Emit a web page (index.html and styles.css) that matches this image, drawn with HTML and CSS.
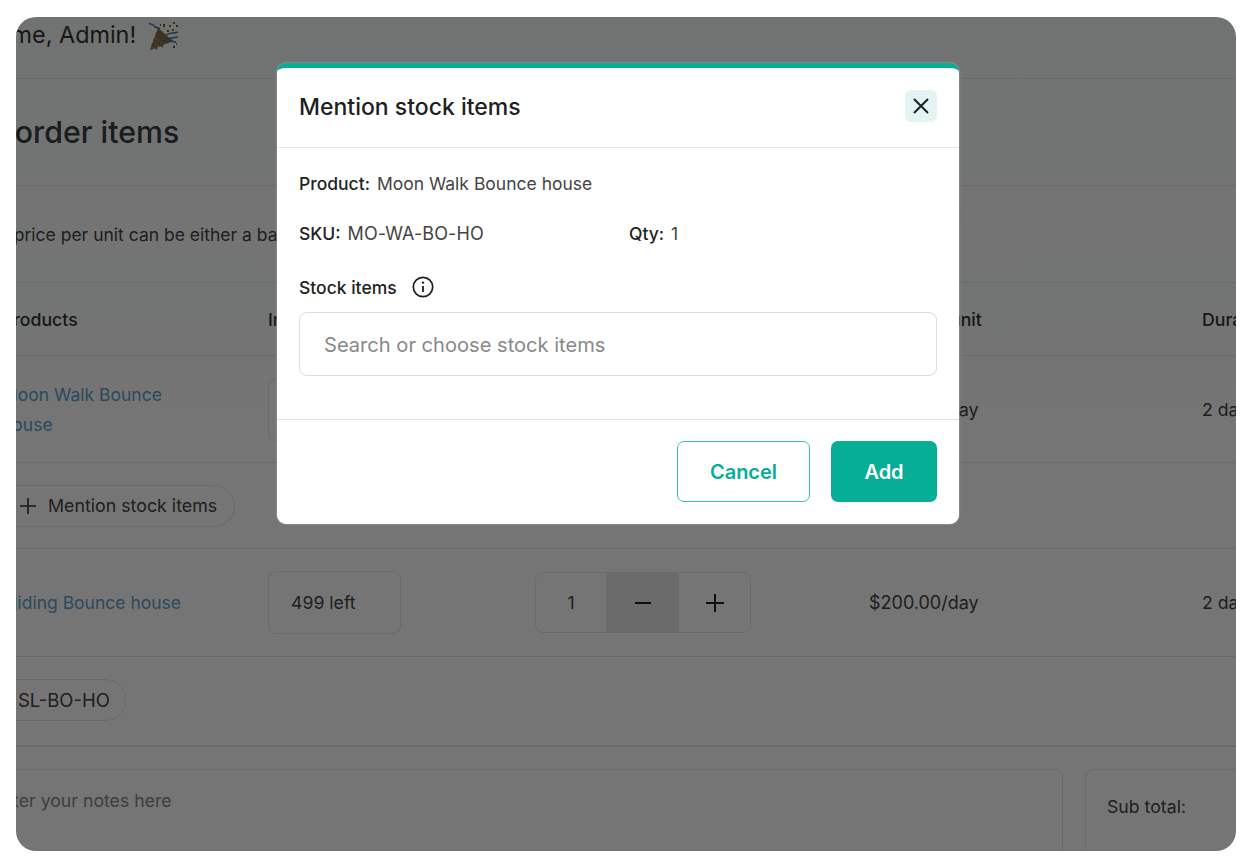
FILE: index.html
```html
<!DOCTYPE html>
<html lang="en">
<head>
<meta charset="utf-8">
<title>Mention stock items</title>
<link rel="stylesheet" href="styles.css">
</head>
<body>
<div class="frame">
  <main class="sheet">
    <header class="topbar">
      <span class="welcome">Welcome, Admin!</span>
      <svg class="popper" viewBox="0 0 30 30" width="30" height="30" aria-hidden="true">
        <path d="M1 28 L9 6 L24 19 Z" fill="#8c6b3c"/>
        <path d="M1 28 L6 14 L15 23 Z" fill="#a27c45"/>
        <path d="M5 17 L14 25 M3 22 L8 27 M7 11 L19 21" stroke="#6f7375" stroke-width="2"/>
        <path d="M0 1 C3 3 5 2 6 5 C8 6 9 5 11 7 M17 13 C21 10 24 12 29 10 M17 17 L29 15 M20 19 L27 20" stroke="#44739a" stroke-width="1.5" fill="none"/>
        <path d="M14 2h2v3h-2z M20 3h2v2h-2z M24 0h2v2h-2z M27 3h2v2h-2z M23 7h2v2h-2z M18 8h2v2h-2z M24 24h2v2h-2z M27 21h1v2h-1z M11 2h1v2h-1z" fill="#7d5f32"/>
      </svg>
    </header>
    <section class="titlebar"><h1 class="title">Add order items</h1></section>
    <p class="note">The price per unit can be either a base price or a custom price</p>
    <div class="row row-head">
      <span class="cell-product">Products</span><span>Inventory</span><span>Quantity</span><span>Price per unit</span><span>Duration</span>
    </div>
    <div class="row row-item row-tall">
      <a class="link cell-product">Moon Walk Bounce<br>house</a>
      <span class="stock">499 left</span>
      <span></span>
      <span class="price">$200.00/day</span>
      <span>2 days</span>
    </div>
    <div class="chip-row chip-row-first">
      <span class="chip chip-add">
        <svg viewBox="0 0 18 18" width="18" height="18" aria-hidden="true"><path d="M9 1v16M1 9h16" stroke="#333" stroke-width="1.6"/></svg>
        Mention stock items
      </span>
    </div>
    <div class="row row-item">
      <a class="link cell-product">Sliding Bounce house</a>
      <span class="stock">499 left</span>
      <span class="stepper">
        <span class="step-value">1</span>
        <span class="step-btn step-active"><svg viewBox="0 0 20 20" width="20" height="20" aria-hidden="true"><path d="M2 10h16" stroke="#222" stroke-width="2"/></svg></span>
        <span class="step-btn"><svg viewBox="0 0 20 20" width="20" height="20" aria-hidden="true"><path d="M10 1v18M1 10h18" stroke="#222" stroke-width="2"/></svg></span>
      </span>
      <span class="price">$200.00/day</span>
      <span>2 days</span>
    </div>
    <div class="chip-row chip-row-last">
      <span class="chip chip-sku">SL-BO-HO</span>
    </div>
    <div class="bottom">
      <div class="notes">Enter your notes here</div>
      <div class="summary">Sub total:</div>
    </div>
  </main>
  <div class="overlay">
    <div class="modal">
      <div class="modal-head">
        <h2 class="modal-title">Mention stock items</h2>
        <button class="close" type="button" aria-label="Close">
          <svg viewBox="0 0 18 18" width="18" height="18" aria-hidden="true"><path d="M2 2l14 14M16 2L2 16" stroke="#1d1f24" stroke-width="2"/></svg>
        </button>
      </div>
      <div class="modal-body">
        <p class="info"><b>Product:</b> Moon Walk Bounce house</p>
        <div class="info-pair">
          <p class="info"><b>SKU:</b> <span class="sku">MO-WA-BO-HO</span></p>
          <p class="info"><b>Qty:</b> 1</p>
        </div>
        <div class="label">
          Stock items
          <svg viewBox="0 0 22 22" width="22" height="22" aria-hidden="true"><circle cx="11" cy="11" r="9.7" fill="none" stroke="#1d1f24" stroke-width="1.7"/><path d="M11 10v6" stroke="#1d1f24" stroke-width="1.8"/><circle cx="11" cy="6.6" r="1.2" fill="#1d1f24"/></svg>
        </div>
        <div class="search">Search or choose stock items</div>
      </div>
      <div class="modal-foot">
        <button class="btn btn-cancel" type="button">Cancel</button>
        <button class="btn btn-add" type="button">Add</button>
      </div>
    </div>
  </div>
</div>
</body>
</html>
```

FILE: styles.css
```css
* { box-sizing: border-box; }
html, body { margin: 0; height: 100%; background: #fff; }
body {
  padding: 17px 16px 16px;
  font-family: Inter, "Noto Sans", sans-serif;
  overflow: hidden;
}
.frame {
  position: relative;
  width: 1220px;
  height: 834px;
  border-radius: 20px;
  overflow: hidden;
  background: #fff;
}
.sheet {
  width: 1400px;
  margin-left: -80px;
  color: #444;
  font-size: 17.7px;
  background: linear-gradient(#f7fbf9, #ffffff 65%);
  min-height: 100%;
}
.topbar {
  height: 62px;
  border-bottom: 1px solid #e8e8e8;
  padding: 0 0 26px 7px;
  display: flex;
  align-items: center;
  gap: 13px;
}
.welcome { font-size: 23.4px; color: #333; }
.popper { margin-top: 4px; flex: none; }
.titlebar {
  height: 107px;
  border-bottom: 1px solid #e8e8e8;
  padding-left: 12px;
  display: flex;
  align-items: center;
}
.title { margin: 0; font-size: 30.3px; font-weight: 500; color: #3a3d42; }
.note {
  margin: 0;
  height: 97px;
  border-bottom: 1px solid #e8e8e8;
  padding: 37px 0 0 41px;
  font-size: 17.5px;
  line-height: 24px;
  white-space: nowrap;
}
.row {
  display: grid;
  grid-template-columns: 332px 267px 334px 333px 128px;
  align-items: center;
  border-bottom: 1px solid #e8e8e8;
}
.row-head { height: 73px; font-weight: 500; color: #333; }
.cell-product { padding-left: 66px; }
.row-item { height: 108px; }
.row-tall { height: 107px; }
.row-tall .link { margin-top: 2px; }
.link { color: #5f9fd0; line-height: 30px; font-size: 17.5px; }
.price { font-size: 18px; }
.stock {
  width: 133px;
  height: 63px;
  border: 1px solid #e8e8e8;
  border-radius: 8px;
  display: flex;
  align-items: center;
  padding-left: 22px;
}
.stepper {
  display: flex;
  width: 216px;
  height: 61px;
  border: 1px solid #e8e8e8;
  border-radius: 8px;
  overflow: hidden;
}
.step-value { width: 71px; display: flex; align-items: center; justify-content: center; }
.step-btn { width: 72px; display: flex; align-items: center; justify-content: center; }
.step-active { background: #e6eae8; width: 74px; }
.chip-row {
  display: flex;
  align-items: center;
  border-bottom: 1px solid #e8e8e8;
  padding-left: 30px;
}
.chip-row-first { height: 86px; }
.chip-row-last { height: 90px; border-bottom-width: 2px; padding-bottom: 3px; }
.chip {
  display: flex;
  align-items: center;
  gap: 11px;
  height: 42px;
  border: 1px solid #e8e8e8;
  border-radius: 21px;
  color: #444;
}
.chip-add { width: 269px; padding-left: 52px; font-size: 17.8px; }
.chip-sku { width: 160px; padding-left: 51px; font-size: 18.5px; }
.bottom {
  display: flex;
  gap: 22px;
  padding: 22px 0 0 38px;
}
.notes {
  flex: none;
  width: 1089px;
  height: 120px;
  border: 1px solid #e8e8e8;
  border-radius: 8px;
  padding: 20px 0 0 17px;
  color: #888;
}
.summary {
  flex: none;
  width: 300px;
  height: 120px;
  border: 1px solid #e8e8e8;
  border-radius: 8px;
  padding: 26px 0 0 21px;
}
.overlay {
  position: absolute;
  inset: 0;
  background: rgba(0, 0, 0, 0.54);
  padding: 46px 0 0 261px;
}
.modal {
  width: 682px;
  height: 461px;
  background: #fff;
  border-top: 5px solid #07ae96;
  border-radius: 9px;
  color: #1d1f24;
  display: flex;
  flex-direction: column;
  box-shadow: 0 0 2px rgba(255, 255, 255, 0.5);
}
.modal-head {
  height: 80px;
  border-bottom: 1px solid #e6e8e8;
  display: flex;
  align-items: center;
  justify-content: space-between;
  padding: 0 22px 3px;
}
.modal-title { margin: 0; padding-top: 2px; font-size: 23px; font-weight: 500; }
.close {
  width: 32px;
  height: 32px;
  padding: 0;
  border: 0;
  border-radius: 6px;
  background: #e2f5f2;
  display: flex;
  align-items: center;
  justify-content: center;
}
.modal-body {
  flex: 1;
  padding: 24px 22px 0;
  font-size: 17.5px;
  color: #444;
}
.info { margin: 0; line-height: 24px; }
.info b { font-weight: 500; color: #222; margin-right: 2px; }
.sku { font-size: 18px; letter-spacing: 0.1px; }
.info-pair { display: grid; grid-template-columns: 330px 1fr; margin-top: 26px; }
.label {
  display: flex;
  align-items: center;
  gap: 15px;
  margin-top: 29px;
  height: 24px;
  font-weight: 500;
  color: #222;
}
.search {
  margin-top: 13px;
  height: 64px;
  border: 1px solid #ddd;
  border-radius: 8px;
  display: flex;
  align-items: center;
  padding: 2px 0 0 24px;
  font-size: 20.1px;
  color: #888;
}
.modal-foot {
  height: 105px;
  border-top: 1px solid #e0e0e0;
  padding: 21px 22px 0 0;
  display: flex;
  justify-content: flex-end;
  gap: 21px;
}
.btn {
  height: 61px;
  border-radius: 7px;
  font: 600 20px Inter, sans-serif;
}
.btn-cancel { width: 133px; background: #fff; border: 1px solid #3dbfac; color: #07ae96; }
.btn-add { width: 106px; background: #07ae96; border: 0; color: #fff; }
```
